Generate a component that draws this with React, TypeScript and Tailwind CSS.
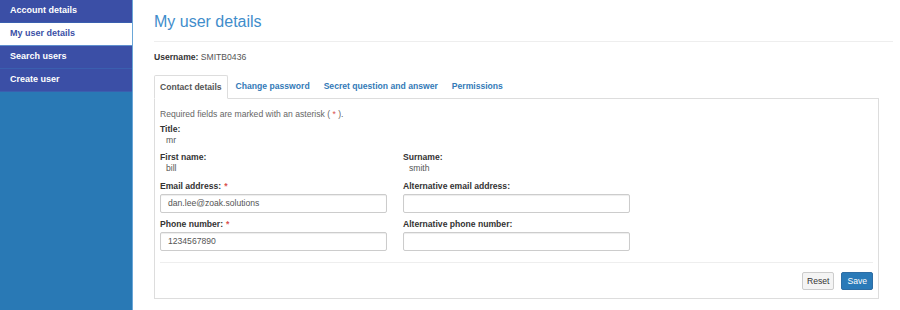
import React from "react";

const font = { fontFamily: '"Liberation Sans", Arial, sans-serif' };

function NavItem({ label, active }: { label: string; active?: boolean }) {
  return (
    <div
      className={
        active
          ? "h-[23px] flex items-center pl-[10px] bg-white text-[#3b4fa6] font-bold text-[9px] border-b border-[#5f8fce]"
          : "h-[23px] flex items-center pl-[10px] bg-[#3b4fa6] text-white font-bold text-[9px] border-b border-[#3a5faf]"
      }
    >
      {label}
    </div>
  );
}

function Label({ text, req }: { text: string; req?: boolean }) {
  return (
    <div className="text-[8.6px] leading-[11px] font-bold text-[#333]">
      {text}
      {req && <span className="text-[#d9534f] ml-[3px]">*</span>}
    </div>
  );
}

function Value({ text }: { text: string }) {
  return <div className="text-[8.6px] leading-[11px] text-[#555] pl-[6px]">{text}</div>;
}

function Input({ value }: { value?: string }) {
  return (
    <div className="w-[227px] h-[19px] border border-[#ccc] rounded-[2px] bg-white flex items-center pl-[7px] text-[8.6px] text-[#555] shadow-[inset_0_1px_1px_rgba(0,0,0,0.075)]">
      {value}
    </div>
  );
}

const tab = "h-[24px] flex items-center px-[5px] border text-[8.6px] font-bold";

export default function App() {
  return (
    <div className="min-h-screen flex bg-white" style={font}>
      <div className="w-[133px] shrink-0 bg-[#2979b5] border-r border-[#6aa7d8]">
        <NavItem label="Account details" />
        <NavItem label="My user details" active />
        <NavItem label="Search users" />
        <NavItem label="Create user" />
      </div>
      <div className="flex-1 pl-[21px] pr-[7px] pt-[12px]">
        <div className="text-[16px] leading-[20px] text-[#3f8dcb]">My user details</div>
        <div className="mt-[9px] border-t border-[#eee]" />
        <div className="mt-[9px] text-[8.6px] leading-[12px] text-[#333]">
          <span className="font-bold">Username:</span> <span className="text-[#555]">SMITB0436</span>
        </div>
        <div className="mr-[14px] mt-[11px]">
          <div className="flex items-end">
            <div className="h-[24px] flex items-center px-[5px] border border-[#ddd] border-b-white bg-white rounded-t-[2px] text-[8.6px] font-bold text-[#555] mr-[2px] -mb-px relative">
              Contact details
            </div>
            <div className="h-[24px] flex items-center px-[5px] border border-transparent text-[8.6px] font-bold text-[#337ab7] mr-[2px]">
              Change password
            </div>
            <div className="h-[24px] flex items-center px-[5px] border border-transparent text-[8.6px] font-bold text-[#337ab7] mr-[2px]">
              Secret question and answer
            </div>
            <div className="h-[24px] flex items-center px-[5px] border border-transparent text-[8.6px] font-bold text-[#337ab7]">
              Permissions
            </div>
          </div>
          <div className="border border-[#ddd] px-[5px] pt-[10px] pb-[8px]">
            <div className="text-[8.6px] leading-[11px] text-[#666]">
              Required fields are marked with an asterisk ( <span className="text-[#d9534f]">*</span> ).
            </div>
            <div className="mt-[4px]">
              <Label text="Title:" />
              <Value text="mr" />
            </div>
            <div className="mt-[6px] grid grid-cols-[243px_243px]">
              <div>
                <Label text="First name:" />
                <Value text="bill" />
              </div>
              <div>
                <Label text="Surname:" />
                <Value text="smith" />
              </div>
            </div>
            <div className="mt-[7px] grid grid-cols-[243px_243px]">
              <div>
                <Label text="Email address:" req />
                <div className="mt-[2px]">
                  <Input value="dan.lee@zoak.solutions" />
                </div>
              </div>
              <div>
                <Label text="Alternative email address:" />
                <div className="mt-[2px]">
                  <Input />
                </div>
              </div>
            </div>
            <div className="mt-[6px] grid grid-cols-[243px_243px]">
              <div>
                <Label text="Phone number:" req />
                <div className="mt-[2px]">
                  <Input value="1234567890" />
                </div>
              </div>
              <div>
                <Label text="Alternative phone number:" />
                <div className="mt-[2px]">
                  <Input />
                </div>
              </div>
            </div>
            <div className="mt-[11px] border-t border-[#eee]" />
            <div className="mt-[9px] flex justify-end gap-[7px]">
              <div className="h-[18px] px-[4px] flex items-center border border-[#ccc] rounded-[2px] bg-[#f4f4f4] text-[8.6px] text-[#333]">
                Reset
              </div>
              <div className="h-[18px] px-[5px] flex items-center border border-[#2e6da4] rounded-[2px] bg-[#2a7ab8] text-[8.6px] text-white">
                Save
              </div>
            </div>
          </div>
        </div>
      </div>
    </div>
  );
}
